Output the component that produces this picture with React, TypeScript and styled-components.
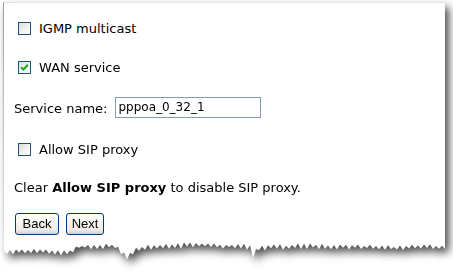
import React from "react";
import styled, { createGlobalStyle } from "styled-components";

const GlobalStyle = createGlobalStyle`
  html, body {
    margin: 0;
    padding: 0;
    background: #ffffff;
  }
  * {
    box-sizing: border-box;
  }
`;

// rough outline of the torn bottom edge, page coordinates
const EDGE: [number, number][] = [
  [3, 252], [40, 251], [70, 253], [78, 247], [115, 246], [122, 252],
  [127, 257], [133, 252], [145, 247], [200, 245], [250, 247], [253, 255],
  [258, 248], [300, 246], [360, 247], [400, 248], [430, 246], [445, 248],
];

const PAPER_LEFT = 3;
const PAPER_TOP = 2;
const PAPER_WIDTH = 442;

const edgeAt = (x: number) => {
  for (let i = 0; i < EDGE.length - 1; i++) {
    const [x0, y0] = EDGE[i];
    const [x1, y1] = EDGE[i + 1];
    if (x >= x0 && x <= x1) {
      return y0 + ((y1 - y0) * (x - x0)) / (x1 - x0);
    }
  }
  return EDGE[EDGE.length - 1][1];
};

const tornClip = () => {
  let seed = 11;
  const rnd = () => {
    seed = (seed * 16807) % 2147483647;
    return seed / 2147483647;
  };
  const pts: string[] = [];
  let i = 0;
  for (let x = PAPER_LEFT + PAPER_WIDTH; x >= PAPER_LEFT; x -= 3) {
    const jitter = (i % 2 ? -1 : 1) * (0.8 + rnd() * 2.2);
    const y = edgeAt(x) + jitter;
    pts.push(`${x - PAPER_LEFT}px ${(y - PAPER_TOP).toFixed(1)}px`);
    i++;
  }
  return `polygon(0 0, ${PAPER_WIDTH}px 0, ${pts.join(", ")})`;
};

const Frame = styled.div`
  padding: ${PAPER_TOP}px 0 0 ${PAPER_LEFT}px;
  width: 453px;
  height: 272px;
  overflow: hidden;
`;

const ShadowWrap = styled.div`
  width: ${PAPER_WIDTH}px;
  filter: drop-shadow(4px 5px 4px rgba(0, 0, 0, 0.7));
`;

const Paper = styled.div<{ $clip: string }>`
  width: ${PAPER_WIDTH}px;
  height: 258px;
  background: #ffffff;
  border-left: 1px solid #9c9c9c;
  border-top: 1px solid #e2e2e2;
  clip-path: ${(p) => p.$clip};
  padding: 18px 0 0 10px;
  display: flex;
  flex-direction: column;
  font-family: "DejaVu Sans", Verdana, sans-serif;
  font-size: 13px;
  color: #000000;
`;

const Row = styled.div<{ $top: number }>`
  display: flex;
  align-items: center;
  height: 15px;
  margin-top: ${(p) => p.$top}px;
  line-height: 15px;
  white-space: nowrap;
`;

const Box = styled.span`
  width: 13px;
  height: 13px;
  margin: 0 8px 0 4px;
  border: 1px solid #1c5180;
  background: linear-gradient(135deg, #dcdcd7 0%, #f4f4f1 60%, #ffffff 100%);
  display: flex;
  align-items: center;
  justify-content: center;
`;

const FieldRow = styled.div<{ $top: number }>`
  display: flex;
  align-items: center;
  height: 21px;
  margin-top: ${(p) => p.$top}px;
  white-space: nowrap;
`;

const Label = styled.span`
  margin-right: 8px;
  padding-top: 2px;
`;

const TextInput = styled.div`
  width: 146px;
  height: 21px;
  border: 1px solid #7f9db9;
  padding: 0 0 0 2px;
  font-size: 12px;
  line-height: 19px;
  display: flex;
  align-items: center;
`;

const Note = styled.div<{ $top: number }>`
  margin-top: ${(p) => p.$top}px;
  height: 15px;
  line-height: 15px;
  white-space: nowrap;
`;

const Buttons = styled.div<{ $top: number }>`
  display: flex;
  gap: 7px;
  margin: ${(p) => p.$top}px 0 0 1px;
`;

const Button = styled.button<{ $width: number }>`
  width: ${(p) => p.$width}px;
  height: 22px;
  padding: 0;
  border: 1px solid #003c74;
  border-radius: 3px;
  background: linear-gradient(180deg, #ffffff 0%, #f5f4ef 45%, #ecebe6 80%, #d6d0c5 100%);
  font-family: "Liberation Sans", Arial, sans-serif;
  font-size: 13px;
  color: #000000;
  line-height: 20px;
`;

const Check: React.FC<{ checked?: boolean }> = ({ checked }) => (
  <Box>
    {checked && (
      <svg width="9" height="9" viewBox="0 0 9 9">
        <polyline points="1.2,4.2 3.4,6.6 7.8,1.8" fill="none" stroke="#21a121" strokeWidth="2" />
      </svg>
    )}
  </Box>
);

const App: React.FC = () => {
  const clip = tornClip();

  return (
    <>
      <GlobalStyle />
      <Frame>
        <ShadowWrap>
          <Paper $clip={clip}>
            <Row $top={0}>
              <Check />
              IGMP multicast
            </Row>
            <Row $top={24}>
              <Check checked />
              WAN service
            </Row>
            <FieldRow $top={22}>
              <Label>Service name:</Label>
              <TextInput>pppoa_0_32_1</TextInput>
            </FieldRow>
            <Row $top={24}>
              <Check />
              Allow SIP proxy
            </Row>
            <Note $top={23}>
              Clear <b>Allow SIP proxy</b> to disable SIP proxy.
            </Note>
            <Buttons $top={18}>
              <Button $width={44}>Back</Button>
              <Button $width={38}>Next</Button>
            </Buttons>
          </Paper>
        </ShadowWrap>
      </Frame>
    </>
  );
};

export default App;
